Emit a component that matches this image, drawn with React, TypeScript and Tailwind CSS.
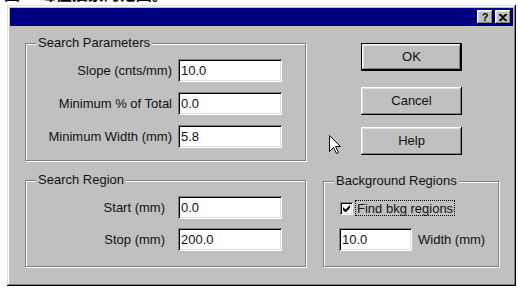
import React from "react";

const raised =
  "bg-[#c0c0c0] shadow-[inset_-1px_-1px_0_#000,inset_1px_1px_0_#fff,inset_-2px_-2px_0_#808080,inset_2px_2px_0_#dfdfdf]";
const sunken =
  "bg-white shadow-[inset_1px_1px_0_#808080,inset_-1px_-1px_0_#fff,inset_2px_2px_0_#000,inset_-2px_-2px_0_#dfdfdf]";

function Field({ value, w = "w-[104px]" }: { value: string; w?: string }) {
  return (
    <div className={`${sunken} ${w} h-[23px] flex items-center pl-[3px] text-[13px] text-[#111]`}>
      {value}
    </div>
  );
}

function Group({
  title,
  className,
  children,
}: {
  title: string;
  className: string;
  children: React.ReactNode;
}) {
  return (
    <div
      className={`relative border border-[#808080] shadow-[inset_1px_1px_0_#fff,1px_1px_0_#fff] ${className}`}
    >
      <span className="absolute left-[10px] top-[-9px] bg-[#c0c0c0] px-[2px] text-[13px] leading-[16px] text-[#111]">
        {title}
      </span>
      {children}
    </div>
  );
}

function Btn({ label, def }: { label: string; def?: boolean }) {
  const inner = (
    <div className={`${raised} w-full h-full flex items-center justify-center text-[13px] text-[#111]`}>
      {label}
    </div>
  );
  if (def)
    return <div className="w-[101px] h-[28px] border border-black">{inner}</div>;
  return <div className="w-[101px] h-[28px]">{inner}</div>;
}

export default function App() {
  return (
    <div
      className="relative w-[518px] h-[288px] bg-white overflow-hidden"
      style={{ fontFamily: '"Liberation Sans", Arial, sans-serif' }}
    >
      <div className="h-[5px] overflow-hidden">
        <div
          className="-mt-[17px] ml-[4px] text-[16px] leading-[20px] font-bold text-black whitespace-nowrap"
          style={{ fontFamily: '"Noto Sans CJK SC", sans-serif' }}
        >
          图一 峰值搜索的范围。
        </div>
      </div>

      <div className="ml-[7px] w-[509px] h-[281px] bg-[#c0c0c0] p-[3px] shadow-[inset_-1px_-1px_0_#000,inset_1px_1px_0_#dfdfdf,inset_-2px_-2px_0_#808080,inset_2px_2px_0_#fff] flex flex-col">
        <div className="h-[18px] bg-[#000080] flex items-center justify-end pr-[2px] gap-[2px]">
          <div className={`${raised} w-[16px] h-[14px] flex items-center justify-center text-[11px] font-bold leading-none text-black`}>
            ?
          </div>
          <div className={`${raised} w-[16px] h-[14px] flex items-center justify-center`}>
            <svg width="8" height="7" viewBox="0 0 8 7">
              <path d="M0 0h2l2 2 2-2h2v1L5 3.5 8 6v1H6L4 5 2 7H0V6l3-2.5L0 1z" fill="#000" />
            </svg>
          </div>
        </div>

        <div className="flex flex-col">
          <div className="flex mt-[17px]">
            <Group title="Search Parameters" className="ml-[15px] w-[281px] h-[118px]">
              <div className="grid grid-cols-[146px_104px] gap-x-[6px] gap-y-[10px] pt-[15px] items-center text-[13px] text-[#111]">
                <div className="text-right">Slope (cnts/mm)</div>
                <Field value="10.0" />
                <div className="text-right">Minimum % of Total</div>
                <Field value="0.0" />
                <div className="text-right">Minimum Width (mm)</div>
                <Field value="5.8" />
              </div>
            </Group>
            <div className="ml-[55px] flex flex-col">
              <Btn label="OK" def />
              <div className="mt-[16px]">
                <Btn label="Cancel" />
              </div>
              <div className="mt-[12px]">
                <Btn label="Help" />
              </div>
            </div>
          </div>

          <div className="flex mt-[19px]">
            <Group title="Search Region" className="ml-[15px] w-[281px] h-[87px]">
              <div className="grid grid-cols-[139px_104px] gap-x-[13px] gap-y-[9px] pt-[15px] items-center text-[13px] text-[#111]">
                <div className="text-right">Start (mm)</div>
                <Field value="0.0" />
                <div className="text-right">Stop (mm)</div>
                <Field value="200.0" />
              </div>
            </Group>
            <Group title="Background Regions" className="ml-[17px] mt-[1px] w-[176px] h-[86px]">
              <div className="flex flex-col pt-[18px] text-[13px] text-[#111]">
                <div className="flex items-center pl-[16px] h-[16px]">
                  <div className={`${sunken} w-[13px] h-[13px] flex items-center justify-center`}>
                    <svg width="7" height="7" viewBox="0 0 7 7">
                      <path d="M0 2v3l2 2h1l4-4V0L2.5 4.5z" fill="#000" />
                    </svg>
                  </div>
                  <div className="ml-[2px] h-[16px] px-[1px] border border-dotted border-black flex items-center leading-none">
                    Find bkg regions
                  </div>
                </div>
                <div className="flex items-center mt-[12px] pl-[15px]">
                  <Field value="10.0" w="w-[73px]" />
                  <div className="ml-[6px]">Width (mm)</div>
                </div>
              </div>
            </Group>
          </div>
        </div>
      </div>

      <svg
        className="absolute left-[329px] top-[135px]"
        width="12"
        height="19"
        viewBox="0 0 12 19"
      >
        <path
          d="M0.5 0.5V16.5L4.5 12.5L7.5 18.5L9.5 17.5L6.5 11.5H11.5Z"
          fill="#fff"
          stroke="#000"
          strokeWidth="1"
        />
      </svg>
    </div>
  );
}
